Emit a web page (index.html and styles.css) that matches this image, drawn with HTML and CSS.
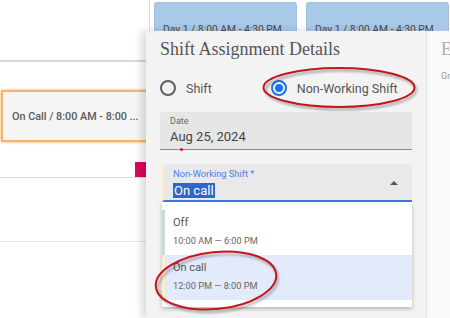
FILE: index.html
```html
<!DOCTYPE html>
<html>
<head>
  <meta charset="utf-8">
  <meta name="viewport" content="width=device-width, initial-scale=1">
  <title>Shift Assignment Details</title>
  <link rel="stylesheet" href="styles.css">
</head>
<body>
  <div class="board">
    <div class="lane">
      <div class="lane-head"></div>
      <div class="lane-body">
        <div class="slot-card">On Call / 8:00 AM - 8:00 ...</div>
        <div class="mark"></div>
        <div class="rule"></div>
        <div class="rule rule-low"></div>
      </div>
    </div>
    <div class="day"><div class="day-card">Day 1 / 8:00 AM - 4:30 PM</div></div>
    <div class="day"><div class="day-card">Day 1 / 8:00 AM - 4:30 PM</div></div>
  </div>

  <div class="sheet">
    <div class="details">
      <h2 class="title">Shift Assignment Details</h2>
      <div class="radios">
        <label class="radio"><span class="dot"></span>Shift</label>
        <label class="radio checked"><span class="dot"></span>Non-Working Shift</label>
      </div>
      <div class="field date">
        <div class="label">Date</div>
        <div class="value">Aug 25, 2024</div>
        <span class="err"></span>
      </div>
      <div class="field select">
        <div class="label">Non-Working Shift *</div>
        <div class="value"><span class="picked">On call</span></div>
        <span class="caret"></span>
        <ul class="menu">
          <li class="opt opt-off">
            <div class="opt-name">Off</div>
            <div class="opt-time">10:00 AM — 6:00 PM</div>
          </li>
          <li class="opt opt-call active">
            <div class="opt-name">On call</div>
            <div class="opt-time">12:00 PM — 8:00 PM</div>
          </li>
        </ul>
      </div>
    </div>
    <div class="side">
      <div class="side-title">E</div>
      <div class="side-sub">Gr</div>
    </div>
  </div>

  <svg class="marks" viewBox="0 0 450 318" width="450" height="318">
    <defs>
      <filter id="soft" x="-20%" y="-20%" width="140%" height="140%">
        <feGaussianBlur stdDeviation="1.2"/>
      </filter>
    </defs>
    <g fill="none">
      <ellipse cx="341" cy="90" rx="75" ry="19.5" stroke="rgba(0,0,0,0.28)" stroke-width="2.5" filter="url(#soft)"/>
      <ellipse cx="339" cy="87.5" rx="75.5" ry="19.5" stroke="#c4161c" stroke-width="2"/>
      <ellipse cx="218" cy="283" rx="60" ry="28.5" transform="rotate(-6 218 283)" stroke="rgba(0,0,0,0.28)" stroke-width="2.5" filter="url(#soft)"/>
      <ellipse cx="216" cy="280.5" rx="60.5" ry="28.5" transform="rotate(-6 216 280.5)" stroke="#c4161c" stroke-width="2"/>
    </g>
  </svg>
</body>
</html>
```

FILE: styles.css
```css
* {
  margin: 0;
  padding: 0;
  box-sizing: border-box;
}

html, body {
  width: 450px;
  height: 318px;
  overflow: hidden;
  background: #fff;
  font-family: Roboto, "Noto Sans", sans-serif;
  color: #555;
}

body {
  position: relative;
}

/* background calendar */
.board {
  display: grid;
  grid-template-columns: 150px 152px 148px;
  height: 100%;
}

.lane {
  border-right: 1px solid #dcdcdc;
}

.lane-head {
  height: 62px;
  border-bottom: 2px solid #d8d8d8;
}

.lane-body {
  display: flex;
  flex-direction: column;
}

.slot-card {
  margin: 28px 0 0 1px;
  height: 52px;
  width: 160px;
  padding: 0 0 0 9px;
  display: flex;
  align-items: center;
  background: #f5f5f5;
  border: 2px solid #f7b46f;
  box-shadow: 0 0 2px 1px rgba(249, 180, 110, 0.6);
  border-radius: 2px;
  font-size: 10.8px;
  font-weight: 500;
  color: #5a5a5a;
  white-space: nowrap;
}

.mark {
  align-self: flex-end;
  margin: 20px -1px 0 0;
  width: 15px;
  height: 15px;
  background: #e0065c;
}

.rule {
  border-top: 1px solid #dedede;
}

.rule-low {
  margin-top: 63px;
  border-top-color: #e6e6e6;
}

.day {
  padding: 2px 0 0 4px;
}

.day-card {
  height: 60px;
  width: 143px;
  padding: 20px 0 0 8px;
  background: #a9c9e9;
  border: 1px solid #9dbfe0;
  border-radius: 3px;
  font-size: 10.3px;
  color: #4a4a4a;
  white-space: nowrap;
}

/* overlay sheet */
.sheet {
  position: absolute;
  left: 146px;
  top: 31px;
  right: 0;
  bottom: 0;
  display: flex;
}

.details {
  position: relative;
  width: 280px;
  padding: 8px 14px 0;
  background: #f3f3f3;
  box-shadow: -4px 0 8px rgba(0, 0, 0, 0.16);
}

.side {
  flex: 1;
  padding: 8px 0 0 14px;
  background: #f9f9f9;
  border-left: 1px solid #e9e9e9;
}

.title, .side-title {
  font-family: "Liberation Serif", "Times New Roman", serif;
  font-weight: normal;
  font-size: 18px;
  line-height: 20px;
  color: #555;
}

.side-title {
  color: #b0b0b0;
}

.side-sub {
  margin-top: 12px;
  font-size: 9px;
  color: #9a9a9a;
}

.radios {
  display: flex;
  align-items: center;
  height: 20px;
  margin-top: 19px;
}

.radio {
  display: flex;
  align-items: center;
  font-size: 12.5px;
  color: #555;
}

.radio + .radio {
  margin-left: 59px;
}

.dot {
  width: 16px;
  height: 16px;
  margin-right: 10px;
  border: 2px solid #5f5f5f;
  border-radius: 50%;
  display: flex;
  align-items: center;
  justify-content: center;
}

.checked .dot {
  border-color: #1a73e8;
}

.checked .dot::after {
  content: '';
  width: 8px;
  height: 8px;
  border-radius: 50%;
  background: #1a73e8;
}

.field {
  position: relative;
  width: 252px;
  margin-top: 14px;
  border-radius: 3px 3px 0 0;
}

.date {
  height: 38px;
  padding: 4px 0 0 10px;
  background: #e6e6e6;
  border-bottom: 1px solid #8c8c8c;
}

.label {
  font-size: 9px;
  line-height: 11px;
  color: #666;
}

.value {
  margin-top: 2px;
  font-size: 13px;
  line-height: 16px;
  color: #444;
}

.err {
  position: absolute;
  left: 20px;
  bottom: -2px;
  width: 3px;
  height: 3px;
  border-radius: 50%;
  background: #e01010;
}

.select {
  width: 250px;
  height: 38px;
  margin-left: 2px;
  padding: 4px 0 0 9px;
  background: #e9e9e9;
  border-left: 2px solid #fcedc6;
  border-bottom: 2px solid #3b78e7;
}

.select .label {
  font-size: 9.3px;
  color: #4a80e0;
}

.select .value {
  margin-top: 4px;
  line-height: 15px;
}

.picked {
  display: inline-block;
  padding: 0 1px;
  background: #2f66c9;
  color: #fff;
}

.caret {
  position: absolute;
  right: 14px;
  top: 17px;
  border-left: 4px solid transparent;
  border-right: 4px solid transparent;
  border-bottom: 4px solid #555;
}

.menu {
  position: absolute;
  left: -2px;
  top: 38px;
  width: 250px;
  padding: 8px 0 7px;
  list-style: none;
  background: #fff;
  box-shadow: 0 2px 4px rgba(0, 0, 0, 0.25);
}

.opt {
  height: 45px;
  padding: 6px 0 0 8px;
  border-left: 3px solid #c9dcdc;
}

.opt-call {
  border-left-color: #fcefc9;
}

.active {
  background: #e3eaf9;
}

.opt-name {
  font-size: 11px;
  line-height: 14px;
  color: #555;
}

.opt-time {
  margin-top: 5px;
  font-size: 9.2px;
  line-height: 12px;
  color: #666;
}

/* annotation rings */
.marks {
  position: absolute;
  left: 0;
  top: 0;
  pointer-events: none;
}
```
